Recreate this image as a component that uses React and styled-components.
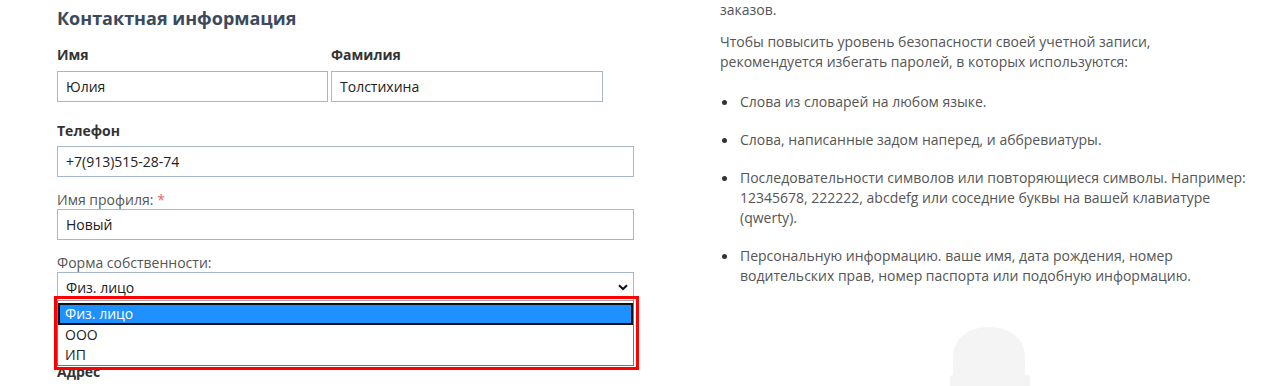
import React from "react";
import styled, { createGlobalStyle } from "styled-components";

const Global = createGlobalStyle`
  html, body { margin: 0; padding: 0; background: #fff; }
  body { font-family: "Open Sans", "Noto Sans", sans-serif; font-size: 14px; color: #333; overflow: hidden; }
  * { box-sizing: border-box; }
`;

const Page = styled.div`
  display: flex;
  align-items: flex-start;
  padding-left: 57px;
  gap: 86px;
  height: 386px;
  overflow: hidden;
`;

const LeftCol = styled.div`
  position: relative;
  flex: 0 0 577px;
  display: flex;
  flex-direction: column;
`;

const Heading = styled.h2`
  margin: 5px 0 0;
  font-size: 18px;
  line-height: 26px;
  font-weight: 700;
  color: #3b4a5c;
`;

const Row = styled.div`
  display: flex;
  gap: 3px;
  margin-top: ${(p) => p.$mt || 0}px;
`;

const Field = styled.div`
  display: flex;
  flex-direction: column;
  width: ${(p) => p.$w || "100%"};
  margin-top: ${(p) => p.$mt || 0}px;
`;

const BoldLabel = styled.label`
  font-weight: 700;
  font-size: 14px;
  line-height: 20px;
  color: #333;
  margin-bottom: ${(p) => (p.$mb != null ? p.$mb : 6)}px;
`;

const Label = styled.label`
  font-size: 14px;
  line-height: 19px;
  color: #555;
`;

const Star = styled.span`
  color: #e4685d;
  margin-left: 4px;
`;

const Input = styled.div`
  height: 31px;
  border: 1px solid #a9b8c8;
  padding: 0 8px;
  display: flex;
  align-items: center;
  font-size: 14px;
  color: #222;
  background: #fff;
`;

const Select = styled.div`
  height: 30px;
  border: 1px solid #a9b8c8;
  border-bottom: none;
  padding: 0 5px 0 8px;
  display: flex;
  align-items: center;
  justify-content: space-between;
  font-size: 14px;
  color: #222;
`;

const Dropdown = styled.div`
  position: absolute;
  left: 0;
  top: 300px;
  width: 577px;
  height: 66px;
  border: 1px solid #767676;
  border-top-color: #a0a0a0;
  background: #fff;
  padding-top: 2px;
  z-index: 2;
`;

const Option = styled.div`
  height: 20px;
  line-height: 20px;
  padding: 0 7px;
  font-size: 14px;
  color: #222;
  ${(p) =>
    p.$active &&
    `
    height: 22px;
    line-height: 18px;
    padding: 0 5px;
    color: #fff;
    background: #1e90ff;
    border: 2px solid #111;
  `}
`;

const RedFrame = styled.div`
  position: absolute;
  left: -3px;
  top: 296px;
  width: 585px;
  height: 74px;
  border: 3px solid #ff0000;
  z-index: 3;
  pointer-events: none;
`;

const RightCol = styled.div`
  flex: 0 0 534px;
  display: flex;
  flex-direction: column;
  color: #555;
  font-size: 14px;
  line-height: 20px;
`;

const Para = styled.p`
  margin: ${(p) => p.$mt || 0}px 0 0;
`;

const List = styled.ul`
  margin: 20px 0 0;
  padding-left: 20px;
  list-style: none;
`;

const Item = styled.li`
  position: relative;
  margin-bottom: 18px;
  &::before {
    content: "";
    position: absolute;
    left: -18px;
    top: 8px;
    width: 5px;
    height: 5px;
    border-radius: 50%;
    background: #333;
  }
`;

const Avatar = styled.div`
  margin: 23px 0 0 230px;
  width: 80px;
  height: 60px;
`;

const Chevron = () => (
  <svg width="10" height="7" viewBox="0 0 10 7">
    <path d="M1 1.2 L5 5 L9 1.2" fill="none" stroke="#111" strokeWidth="2" />
  </svg>
);

const item3 =
  "Последовательности символов или повторяющиеся символы. Например: 12345678, 222222, abcdefg или соседние буквы на вашей клавиатуре (qwerty).";
const item4 =
  "Персональную информацию. ваше имя, дата рождения, номер водительских прав, номер паспорта или подобную информацию.";

export default function App() {
  return (
    <>
      <Global />
      <Page>
        <LeftCol>
          <Heading>Контактная информация</Heading>
          <Row $mt={14}>
            <Field $w="271px">
              <BoldLabel>Имя</BoldLabel>
              <Input>Юлия</Input>
            </Field>
            <Field $w="272px">
              <BoldLabel>Фамилия</BoldLabel>
              <Input>Толстихина</Input>
            </Field>
          </Row>
          <Field $mt={19}>
            <BoldLabel $mb={5}>Телефон</BoldLabel>
            <Input>+7(913)515-28-74</Input>
          </Field>
          <Field $mt={13}>
            <Label>
              Имя профиля:<Star>*</Star>
            </Label>
            <Input>Новый</Input>
          </Field>
          <Field $mt={13}>
            <Label>Форма собственности:</Label>
            <Select>
              <span>Физ. лицо</span>
              <Chevron />
            </Select>
          </Field>
          <Field $mt={60}>
            <BoldLabel>Адрес</BoldLabel>
          </Field>
          <Dropdown>
            <Option $active>Физ. лицо</Option>
            <Option>ООО</Option>
            <Option>ИП</Option>
          </Dropdown>
          <RedFrame />
        </LeftCol>
        <RightCol>
          <Para>заказов.</Para>
          <Para $mt={12}>
            Чтобы повысить уровень безопасности своей учетной записи,
            рекомендуется избегать паролей, в которых используются:
          </Para>
          <List>
            <Item>Слова из словарей на любом языке.</Item>
            <Item>Слова, написанные задом наперед, и аббревиатуры.</Item>
            <Item>{item3}</Item>
            <Item>{item4}</Item>
          </List>
          <Avatar>
            <svg width="80" height="60" viewBox="0 0 80 60">
              <path
                d="M3 60 V30 C3 12 18 0 39 0 C60 0 75 12 75 30 V60 Z"
                fill="#f4f4f4"
              />
              <rect x="0" y="48" width="80" height="12" rx="2" fill="#f4f4f4" />
            </svg>
          </Avatar>
        </RightCol>
      </Page>
    </>
  );
}
